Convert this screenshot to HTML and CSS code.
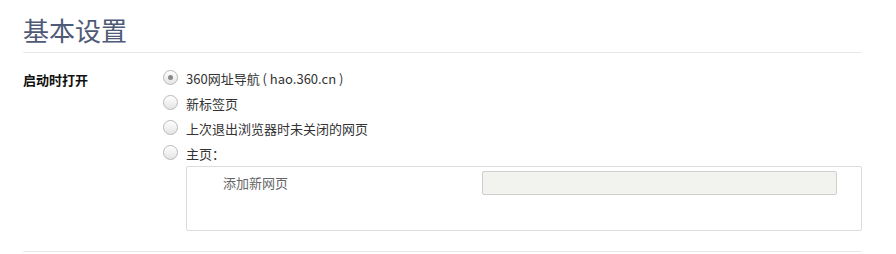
FILE: index.html
```html
<!DOCTYPE html>
<html lang="zh">
<head>
<meta charset="utf-8">
<link rel="stylesheet" href="styles.css">
</head>
<body>
<div class="page">
  <h1 class="title">基本设置</h1>
  <div class="section">
    <div class="label">启动时打开</div>
    <div class="options">
      <label class="opt"><span class="radio checked"></span><span>360网址导航 ( hao.360.cn )</span></label>
      <label class="opt"><span class="radio"></span><span>新标签页</span></label>
      <label class="opt"><span class="radio"></span><span>上次退出浏览器时未关闭的网页</span></label>
      <label class="opt"><span class="radio"></span><span>主页：</span></label>
      <div class="homebox">
        <div class="addrow">
          <span class="addtext">添加新网页</span>
          <div class="input"></div>
        </div>
      </div>
    </div>
  </div>
</div>
</body>
</html>
```
FILE: styles.css
```css
html, body {
  margin: 0;
  padding: 0;
  background: #fff;
}
body {
  font-family: "Noto Sans CJK SC", "Noto Sans", sans-serif;
  font-size: 13px;
  color: #333;
}
.page {
  width: 839px;
  margin-left: 23px;
}
.title {
  margin: 0;
  padding-top: 13px;
  height: 39px;
  font-size: 26px;
  line-height: 34px;
  font-weight: normal;
  color: #4f5a77;
  border-bottom: 1px solid #e8e8e8;
}
.section {
  display: flex;
  padding-top: 12px;
  padding-bottom: 20px;
  border-bottom: 1px solid #e8e8e8;
}
.label {
  width: 140px;
  font-weight: bold;
  color: #111;
  line-height: 25px;
  padding-top: 2px;
}
.options {
  flex: 1;
  display: flex;
  flex-direction: column;
}
.opt {
  display: flex;
  align-items: center;
  height: 25px;
  gap: 8px;
  color: #333;
}
.opt span:last-child {
  padding-top: 2px;
}
.radio {
  box-sizing: border-box;
  width: 15px;
  height: 15px;
  border-radius: 50%;
  border: 1px solid #b8b8b8;
  background: linear-gradient(#ffffff, #e4e4e4);
  box-shadow: inset 0 1px 1px rgba(255,255,255,0.9);
  display: flex;
  align-items: center;
  justify-content: center;
}
.radio.checked::after {
  content: "";
  width: 5px;
  height: 5px;
  border-radius: 50%;
  background: #8a8a8a;
}
.homebox {
  margin-left: 23px;
  margin-top: 1px;
  height: 63px;
  border: 1px solid #dcdcdc;
  border-radius: 2px;
}
.addrow {
  display: flex;
  align-items: flex-start;
  padding-top: 4px;
  padding-left: 36px;
  padding-right: 24px;
}
.addtext {
  color: #666;
  line-height: 24px;
  width: 259px;
}
.input {
  flex: 1;
  box-sizing: border-box;
  height: 24px;
  background: #f2f2ee;
  border: 1px solid #cfcfcf;
  border-radius: 2px;
}
```
